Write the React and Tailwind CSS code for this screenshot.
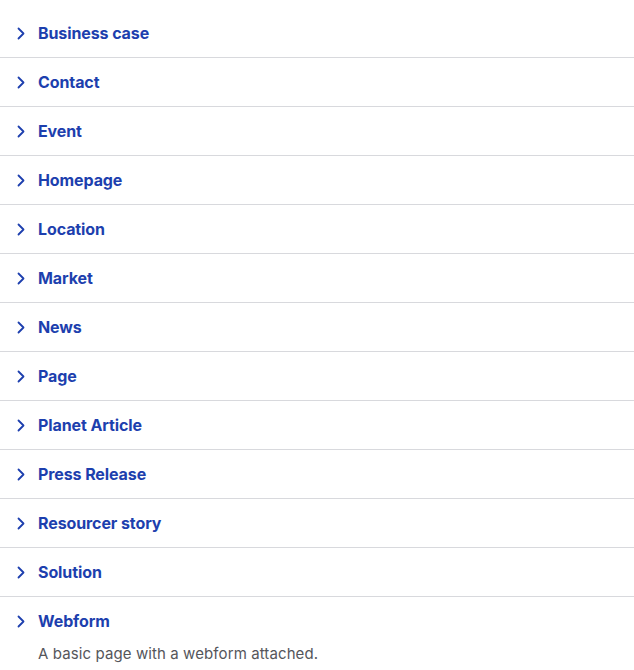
import React from "react";

const items = [
  "Business case",
  "Contact",
  "Event",
  "Homepage",
  "Location",
  "Market",
  "News",
  "Page",
  "Planet Article",
  "Press Release",
  "Resourcer story",
  "Solution",
];

function Chevron() {
  return (
    <svg width="8" height="13" viewBox="0 0 8 13" className="shrink-0">
      <path d="M1.5 1.5 L6.5 6.5 L1.5 11.5" fill="none" stroke="#1d3fae" strokeWidth="1.8" strokeLinecap="round" strokeLinejoin="round" />
    </svg>
  );
}

export default function App() {
  return (
    <div className="bg-white pt-[9px]" style={{ fontFamily: "Inter, 'Noto Sans', sans-serif" }}>
      {items.map((t) => (
        <div key={t} className="h-[49px] border-b border-[#d8d9dd] flex items-center pl-[17px]">
          <Chevron />
          <span className="ml-[13px] text-[16px] font-bold tracking-[-0.1px] text-[#1d3fae]">{t}</span>
        </div>
      ))}
      <div className="pl-[17px]">
        <div className="h-[48px] flex items-center">
          <Chevron />
          <span className="ml-[13px] text-[16px] font-bold tracking-[-0.1px] text-[#1d3fae]">Webform</span>
        </div>
        <div className="pl-[21px] text-[15px] tracking-[0.1px] text-[#55565b] -mt-[2px]">A basic page with a webform attached.</div>
      </div>
    </div>
  );
}
